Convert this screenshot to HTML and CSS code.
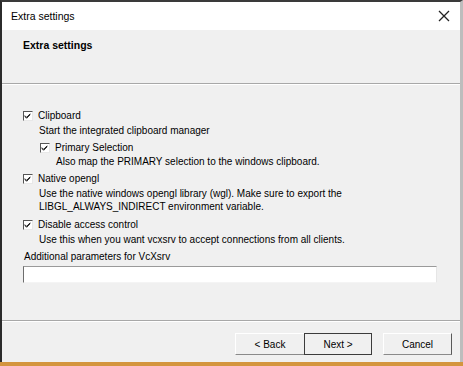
FILE: index.html
```html
<!DOCTYPE html>
<html lang="en">
<head>
  <meta charset="UTF-8" />
  <title>Extra settings</title>
  <link rel="stylesheet" href="styles.css">
</head>
<body>
  <div class="window">
    <div class="titlebar">
      <span class="title">Extra settings</span>
      <svg class="close" width="12" height="12" viewBox="0 0 12 12">
        <path d="M1 1 L11 11 M11 1 L1 11" stroke="#222" stroke-width="1.3" fill="none"/>
      </svg>
    </div>

    <div class="header">
      <h1>Extra settings</h1>
    </div>

    <div class="content">
      <div class="check">
        <span class="box"><svg width="10" height="10" viewBox="0 0 10 10"><path d="M2 4.5 L4 6.5 L8 2.5 M2 5.5 L4 7.5 L8 3.5" stroke="#000" stroke-width="1" fill="none"/></svg></span>
        <span>Clipboard</span>
      </div>
      <div class="desc first">Start the integrated clipboard manager</div>

      <div class="check sub">
        <span class="box"><svg width="10" height="10" viewBox="0 0 10 10"><path d="M2 4.5 L4 6.5 L8 2.5 M2 5.5 L4 7.5 L8 3.5" stroke="#000" stroke-width="1" fill="none"/></svg></span>
        <span>Primary Selection</span>
      </div>
      <div class="desc sub tight">Also map the PRIMARY selection to the windows clipboard.</div>

      <div class="check spaced">
        <span class="box"><svg width="10" height="10" viewBox="0 0 10 10"><path d="M2 4.5 L4 6.5 L8 2.5 M2 5.5 L4 7.5 L8 3.5" stroke="#000" stroke-width="1" fill="none"/></svg></span>
        <span>Native opengl</span>
      </div>
      <div class="desc">Use the native windows opengl library (wgl). Make sure to export the<br>LIBGL_ALWAYS_INDIRECT environment variable.</div>

      <div class="check spaced-lg">
        <span class="box"><svg width="10" height="10" viewBox="0 0 10 10"><path d="M2 4.5 L4 6.5 L8 2.5 M2 5.5 L4 7.5 L8 3.5" stroke="#000" stroke-width="1" fill="none"/></svg></span>
        <span>Disable access control</span>
      </div>
      <div class="desc">Use this when you want vcxsrv to accept connections from all clients.</div>

      <label class="field-label" for="params">Additional parameters for VcXsrv</label>
      <input class="field" id="params" type="text">
    </div>

    <div class="footer">
      <button class="btn">&lt; Back</button>
      <button class="btn default">Next &gt;</button>
      <button class="btn cancel">Cancel</button>
    </div>
  </div>
</body>
</html>
```

FILE: styles.css
```css
html, body {
  margin: 0;
  padding: 0;
  width: 463px;
  height: 366px;
  overflow: hidden;
  background: #d4953e;
}

body {
  font-family: "Liberation Sans", Arial, sans-serif;
  font-size: 10px;
  color: #000;
}

.window {
  box-sizing: border-box;
  width: 463px;
  height: 362px;
  display: flex;
  flex-direction: column;
  background: #f0f0f0;
  border-top: 2px solid #3a3a3a;
  border-left: 2px solid #2b2b2b;
  border-right: 3px solid #bdbdbd;
}

.titlebar {
  height: 28px;
  background: #fff;
  display: flex;
  align-items: center;
  justify-content: space-between;
  padding: 0 10px 0 9px;
  font-size: 10.5px;
}

.close {
  display: block;
}

.header {
  height: 53px;
  border-bottom: 1px solid #a8a8a8;
  box-shadow: 0 1px 0 #fff;
}

h1 {
  margin: 0;
  padding: 9px 0 0 21px;
  font-size: 10.5px;
  font-weight: bold;
}

.content {
  flex: 1;
  padding: 24px 0 0 21px;
  display: flex;
  flex-direction: column;
  align-items: flex-start;
}

.check {
  display: flex;
  align-items: center;
  gap: 5px;
  height: 15px;
  line-height: 15px;
}

.check.sub {
  margin-left: 17px;
  margin-top: 3px;
}

.check.spaced {
  margin-top: 3px;
}

.check.spaced-lg {
  margin-top: 4px;
}

.box {
  width: 10px;
  height: 10px;
  box-sizing: border-box;
  border-top: 1px solid #555;
  border-left: 1px solid #555;
  border-right: 1px solid #e8e8e8;
  border-bottom: 1px solid #e8e8e8;
  background: #fff;
  display: flex;
}

.box svg {
  margin: -1px 0 0 -1px;
}

.desc {
  margin: 1px 0 0 16px;
  line-height: 13px;
}

.desc.sub {
  margin-left: 33px;
}

.desc.tight {
  margin-top: 0;
}

.field-label {
  margin-top: 4px;
  line-height: 13px;
  padding-left: 1px;
}

.field {
  box-sizing: border-box;
  margin-top: 3px;
  width: 414px;
  height: 17px;
  background: #fff;
  border: none;
  border-top: 1px solid #9a9a9a;
  border-left: 1px solid #6d6d6d;
  border-right: 1px solid #e6e6e6;
  border-bottom: 1px solid #f4f4f4;
  padding: 0;
}

.footer {
  height: 42px;
  border-top: 1px solid #a8a8a8;
  box-shadow: inset 0 1px 0 #fff;
  display: flex;
  align-items: flex-start;
  padding: 12px 0 0 233px;
  box-sizing: border-box;
}

.btn {
  box-sizing: border-box;
  width: 70px;
  height: 22px;
  font-family: inherit;
  font-size: 10px;
  background: #f0f0f0;
  border: none;
  border-top: 1px solid #fff;
  border-left: 1px solid #fff;
  border-right: 1px solid #5a5a5a;
  border-bottom: 1px solid #8a8a8a;
  padding: 0;
  color: #000;
}

.btn.default {
  border: 1px solid #3c3c3c;
  width: 68px;
  margin-left: -1px;
}

.btn.cancel {
  margin-left: 11px;
  width: 69px;
}
```
